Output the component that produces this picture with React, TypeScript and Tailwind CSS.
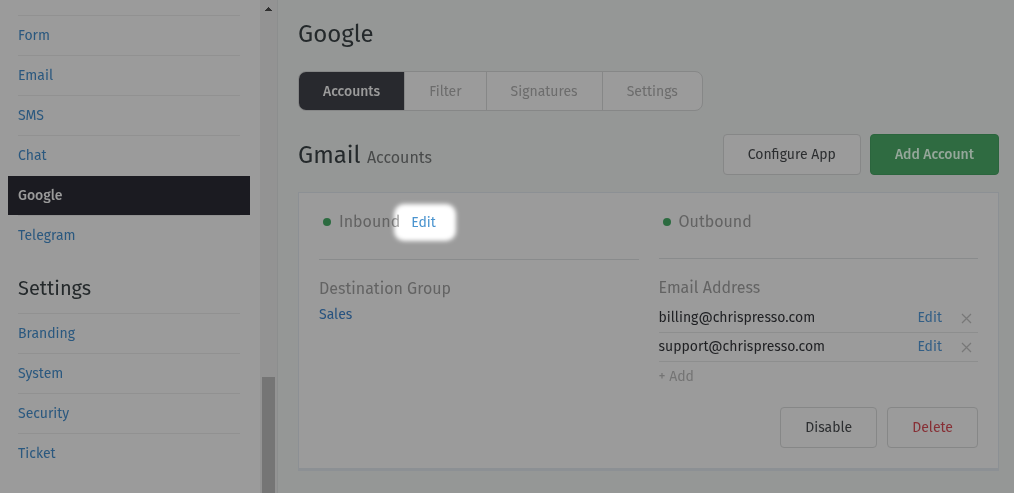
import type { ReactNode } from "react";

const channels = ["Form", "Email", "SMS", "Chat", "Google", "Telegram"];
const settings = ["Branding", "System", "Security", "Ticket"];
const tabs = ["Accounts", "Filter", "Signatures", "Settings"];
const addresses = ["billing@chrispresso.com", "support@chrispresso.com"];

function NavList({ items, active }: { items: string[]; active?: string }) {
  return (
    <ul>
      {items.map((item) =>
        item === active ? (
          <li key={item} className="-mx-2.5 h-10 border-t border-transparent bg-[#1b1b21] bg-clip-padding">
            <a href="#" aria-current="page" className="block px-2.5 leading-10 font-medium text-[#9b9b9b]">
              {item}
            </a>
          </li>
        ) : (
          <li key={item} className="h-10 border-t border-[#919191]">
            <a href="#" className="block leading-10 text-[#2a587f]">
              {item}
            </a>
          </li>
        ),
      )}
    </ul>
  );
}

function Sidebar() {
  return (
    <aside className="flex w-[278px] shrink-0 border-r border-[#8c8e8e] bg-[#9b9b9b]">
      <nav className="flex-1 pt-[15px] pr-5 pb-5 pl-[18px]">
        <NavList items={channels} active="Google" />
        <h2 className="pt-[19px] pb-[11px] text-[20px] leading-7 text-[#24292b]">Settings</h2>
        <NavList items={settings} />
      </nav>
      <div className="flex w-[17px] flex-col justify-between bg-[#939393]">
        <svg className="mt-[7px] ml-[5px]" width="7" height="4" viewBox="0 0 7 4" shapeRendering="crispEdges">
          <path d="M3 0h1v1h1v1h1v1h1v1H0V3h1V2h1V1h1z" fill="#303030" />
        </svg>
        <div className="mr-0.5 ml-0.5 h-[116px] bg-[#757575]" />
      </div>
    </aside>
  );
}

function Button({ className, children }: { className: string; children: ReactNode }) {
  return (
    <button type="button" className={`h-[41px] rounded-[4px] border px-6 ${className}`}>
      {children}
    </button>
  );
}

function StatusHeading({ children }: { children: ReactNode }) {
  return (
    <h3 className="flex items-center gap-2 pl-1 text-[16px] leading-6 text-[#636363]">
      <span className="size-2 rounded-full bg-[#2c6b40]" />
      {children}
    </h3>
  );
}

export default function App() {
  return (
    <div className="flex min-h-screen bg-[#959796] font-['Fira_Sans','Noto_Sans',sans-serif] text-[14px] leading-5">
      <Sidebar />
      <main className="min-w-0 flex-1 px-5 pt-[18px] pr-[15px]">
        <h1 className="text-[24px] leading-8 text-[#24292b]">Google</h1>

        <div role="tablist" className="mt-[21px] flex h-10 w-fit overflow-hidden rounded-lg border border-[#868787] bg-[#9b9b9b]">
          {tabs.map((tab, i) => (
            <button
              key={tab}
              type="button"
              role="tab"
              aria-selected={i === 0}
              className={
                i === 0
                  ? "bg-[#28292e] px-6 pt-0.5 font-medium text-[#9b9b9b]"
                  : "border-l border-[#868787] px-6 pt-0.5 text-[#6c6c6c]"
              }
            >
              {tab}
            </button>
          ))}
        </div>

        <div className="mt-[23px] flex items-center gap-[9px]">
          <h2 className="mr-auto pt-1 text-[24px] leading-8 text-[#24292b]">
            Gmail <small className="text-[16px] text-[#484a4a]">Accounts</small>
          </h2>
          <Button className="border-[#868787] bg-[#9b9b9b] text-[#2c2e30]">Configure App</Button>
          <Button className="border-[#2b653d] bg-[#2f6b41] font-medium text-[#95a79a]">Add Account</Button>
        </div>

        <section className="mt-[17px] border border-b-[3px] border-[#8c9094] bg-[#9b9b9b] px-5 pt-[17px] pb-5">
          <div className="grid grid-cols-2 gap-5">
            <div>
              <div className="flex h-[50px] items-start gap-[11px] border-b border-[#898b8c]">
                <StatusHeading>Inbound</StatusHeading>
                <a href="#" className="relative pt-px leading-6 text-[#4a94cf]">
                  {/* dodge lifts the grey beneath it back to full brightness */}
                  <span className="absolute -top-1.5 -right-5 -bottom-1.5 -left-[17px] rounded-[10px] bg-[#656565] mix-blend-color-dodge blur-[2px]" />
                  <span className="relative">Edit</span>
                </a>
              </div>
              <h4 className="mt-[17px] text-[16px] leading-6 text-[#636363]">Destination Group</h4>
              <a href="#" className="mt-1 block w-fit text-[#26527f]">Sales</a>
            </div>
            <div>
              <div className="h-[49px] border-b border-[#898b8c]">
                <StatusHeading>Outbound</StatusHeading>
              </div>
              <h4 className="mt-[17px] text-[16px] leading-6 text-[#636363]">Email Address</h4>
              <ul className="mt-1">
                {addresses.map((address) => (
                  <li key={address} className="flex h-[29px] items-center border-b border-[#8d8e8e] pr-1.5">
                    <span className="mr-auto text-[#1e1f22]">{address}</span>
                    <a href="#" className="text-[#335f86]">Edit</a>
                    <button type="button" aria-label={`Remove ${address}`} className="ml-[19px]">
                      <svg width="11" height="11" viewBox="0 0 11 11" fill="none" stroke="#787878" strokeWidth="1.2">
                        <path d="M1 1l9 9M10 1l-9 9" />
                      </svg>
                    </button>
                  </li>
                ))}
              </ul>
              <button type="button" className="mt-[5px] text-[#747474]">+ Add</button>
            </div>
          </div>
          <div className="mt-5 flex justify-end gap-[10px]">
            <Button className="border-[#868787] text-[#2c2e30]">Disable</Button>
            <Button className="border-[#868787] text-[#872f35]">Delete</Button>
          </div>
        </section>
      </main>
    </div>
  );
}
